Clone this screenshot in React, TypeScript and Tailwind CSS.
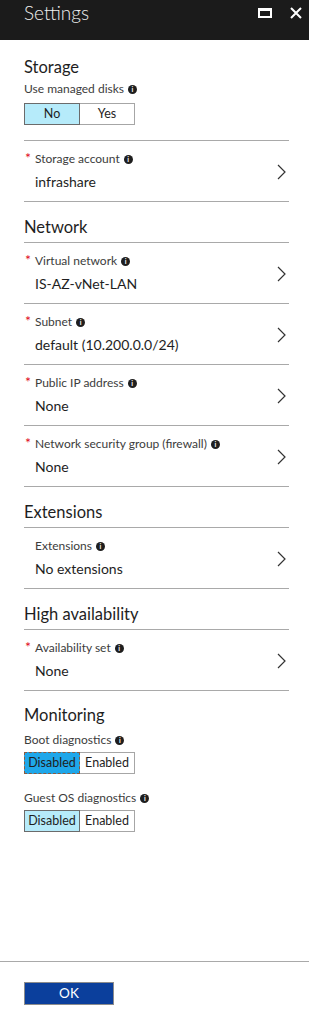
import React from "react";

const font = { fontFamily: 'Lato, "Open Sans", sans-serif' };

function Info() {
  return (
    <span className="ml-[4px] inline-flex h-[9px] w-[9px] items-center justify-center rounded-full bg-[#1e1e1e]">
      <span className="text-[7px] font-bold leading-none text-white">i</span>
    </span>
  );
}

function Chevron() {
  return (
    <svg width="9" height="16" viewBox="0 0 9 16" className="shrink-0">
      <path d="M1 1 L8 8 L1 15" fill="none" stroke="#333" strokeWidth="1.2" />
    </svg>
  );
}

function Heading({ children }: { children: React.ReactNode }) {
  return (
    <div className="border-t border-[#a9a9a9] pt-[15px] pb-[5px]">
      <h2 className="text-[16.5px] leading-[20px] text-[#1e1e1e]">{children}</h2>
    </div>
  );
}

function Label({ children }: { children: React.ReactNode }) {
  return <div className="flex h-[16px] items-center text-[12px] text-[#3c3c3c]">{children}</div>;
}

function Row({ label, value, required = true, last }: { label: string; value: string; required?: boolean; last?: boolean }) {
  return (
    <div className={"flex items-center border-t border-[#a9a9a9] pr-[3px] pt-[10px] pb-[9px] " + (last ? "border-b" : "")}>
      <div className="flex-1">
        <Label>
          <span className="h-[16px] w-[11px] pl-[1px] text-[14px] leading-[14px] text-[#e00b1c]">{required ? "*" : ""}</span>
          {label}
          <Info />
        </Label>
        <div className="mt-[5px] pl-[11px] text-[14px] leading-[20px] text-[#1e1e1e]">{value}</div>
      </div>
      <Chevron />
    </div>
  );
}

function Toggle({ left, right, focused }: { left: string; right: string; focused?: boolean }) {
  return (
    <div className="flex h-[22px] w-[111px] text-[12.5px] text-[#1e1e1e]">
      <div
        className={
          "flex w-[56px] items-center justify-center border " +
          (focused ? "border-dashed border-[#8a5a40] bg-[#1fa7ea]" : "border-[#6b6b6b] bg-[#b6ebfa]")
        }
      >
        {left}
      </div>
      <div className="flex flex-1 items-center justify-center border border-l-0 border-[#a6a6a6] bg-white">{right}</div>
    </div>
  );
}

export default function App() {
  return (
    <div className="flex h-[1014px] w-[309px] flex-col bg-white" style={font}>
      {/* Header */}
      <div className="flex h-[40px] shrink-0 items-start justify-between bg-[#1b1b1b] pl-[24px] pr-[7px] pt-[1px]">
        <span className="text-[19px] font-light leading-[24px] text-[#f0f0f0]">Settings</span>
        <div className="flex items-center gap-[18px] pt-[6px]">
          <svg width="14" height="10" viewBox="0 0 14 10">
            <rect x="1" y="1.5" width="12" height="7.5" fill="none" stroke="#fff" strokeWidth="2" />
            <rect x="0" y="0" width="14" height="3" fill="#fff" />
          </svg>
          <svg width="12" height="12" viewBox="0 0 12 12">
            <path d="M1 1 L11 11 M11 1 L1 11" stroke="#fff" strokeWidth="2" />
          </svg>
        </div>
      </div>

      {/* Content */}
      <div className="flex-1 pl-[24px] pr-[20px]">
        <div className="pt-[17px]">
          <h2 className="text-[16.5px] leading-[20px] text-[#1e1e1e]">Storage</h2>
        </div>
        <div className="mt-[4px]">
          <Label>
            Use managed disks
            <Info />
          </Label>
        </div>
        <div className="mt-[6px] mb-[15px]">
          <Toggle left="No" right="Yes" />
        </div>
        <Row label="Storage account" value="infrashare" />

        <Heading>Network</Heading>
        <Row label="Virtual network" value="IS-AZ-vNet-LAN" />
        <Row label="Subnet" value="default (10.200.0.0/24)" />
        <Row label="Public IP address" value="None" />
        <Row label="Network security group (firewall)" value="None" />

        <Heading>Extensions</Heading>
        <Row label="Extensions" value="No extensions" required={false} />

        <Heading>High availability</Heading>
        <Row label="Availability set" value="None" last />

        <div className="pt-[14px]">
          <h2 className="text-[16.5px] leading-[20px] text-[#1e1e1e]">Monitoring</h2>
        </div>
        <div className="mt-[7px]">
          <Label>
            Boot diagnostics
            <Info />
          </Label>
        </div>
        <div className="mt-[4px]">
          <Toggle left="Disabled" right="Enabled" focused />
        </div>
        <div className="mt-[16px]">
          <Label>
            Guest OS diagnostics
            <Info />
          </Label>
        </div>
        <div className="mt-[4px]">
          <Toggle left="Disabled" right="Enabled" />
        </div>
      </div>

      {/* Footer */}
      <div className="h-[53px] shrink-0 border-t border-[#a9a9a9] pl-[24px] pt-[20px]">
        <button className="flex h-[23px] w-[90px] items-center justify-center border border-[#8c8c8c] bg-[#0b3f9c] text-[13.5px] text-white">
          OK
        </button>
      </div>
    </div>
  );
}
